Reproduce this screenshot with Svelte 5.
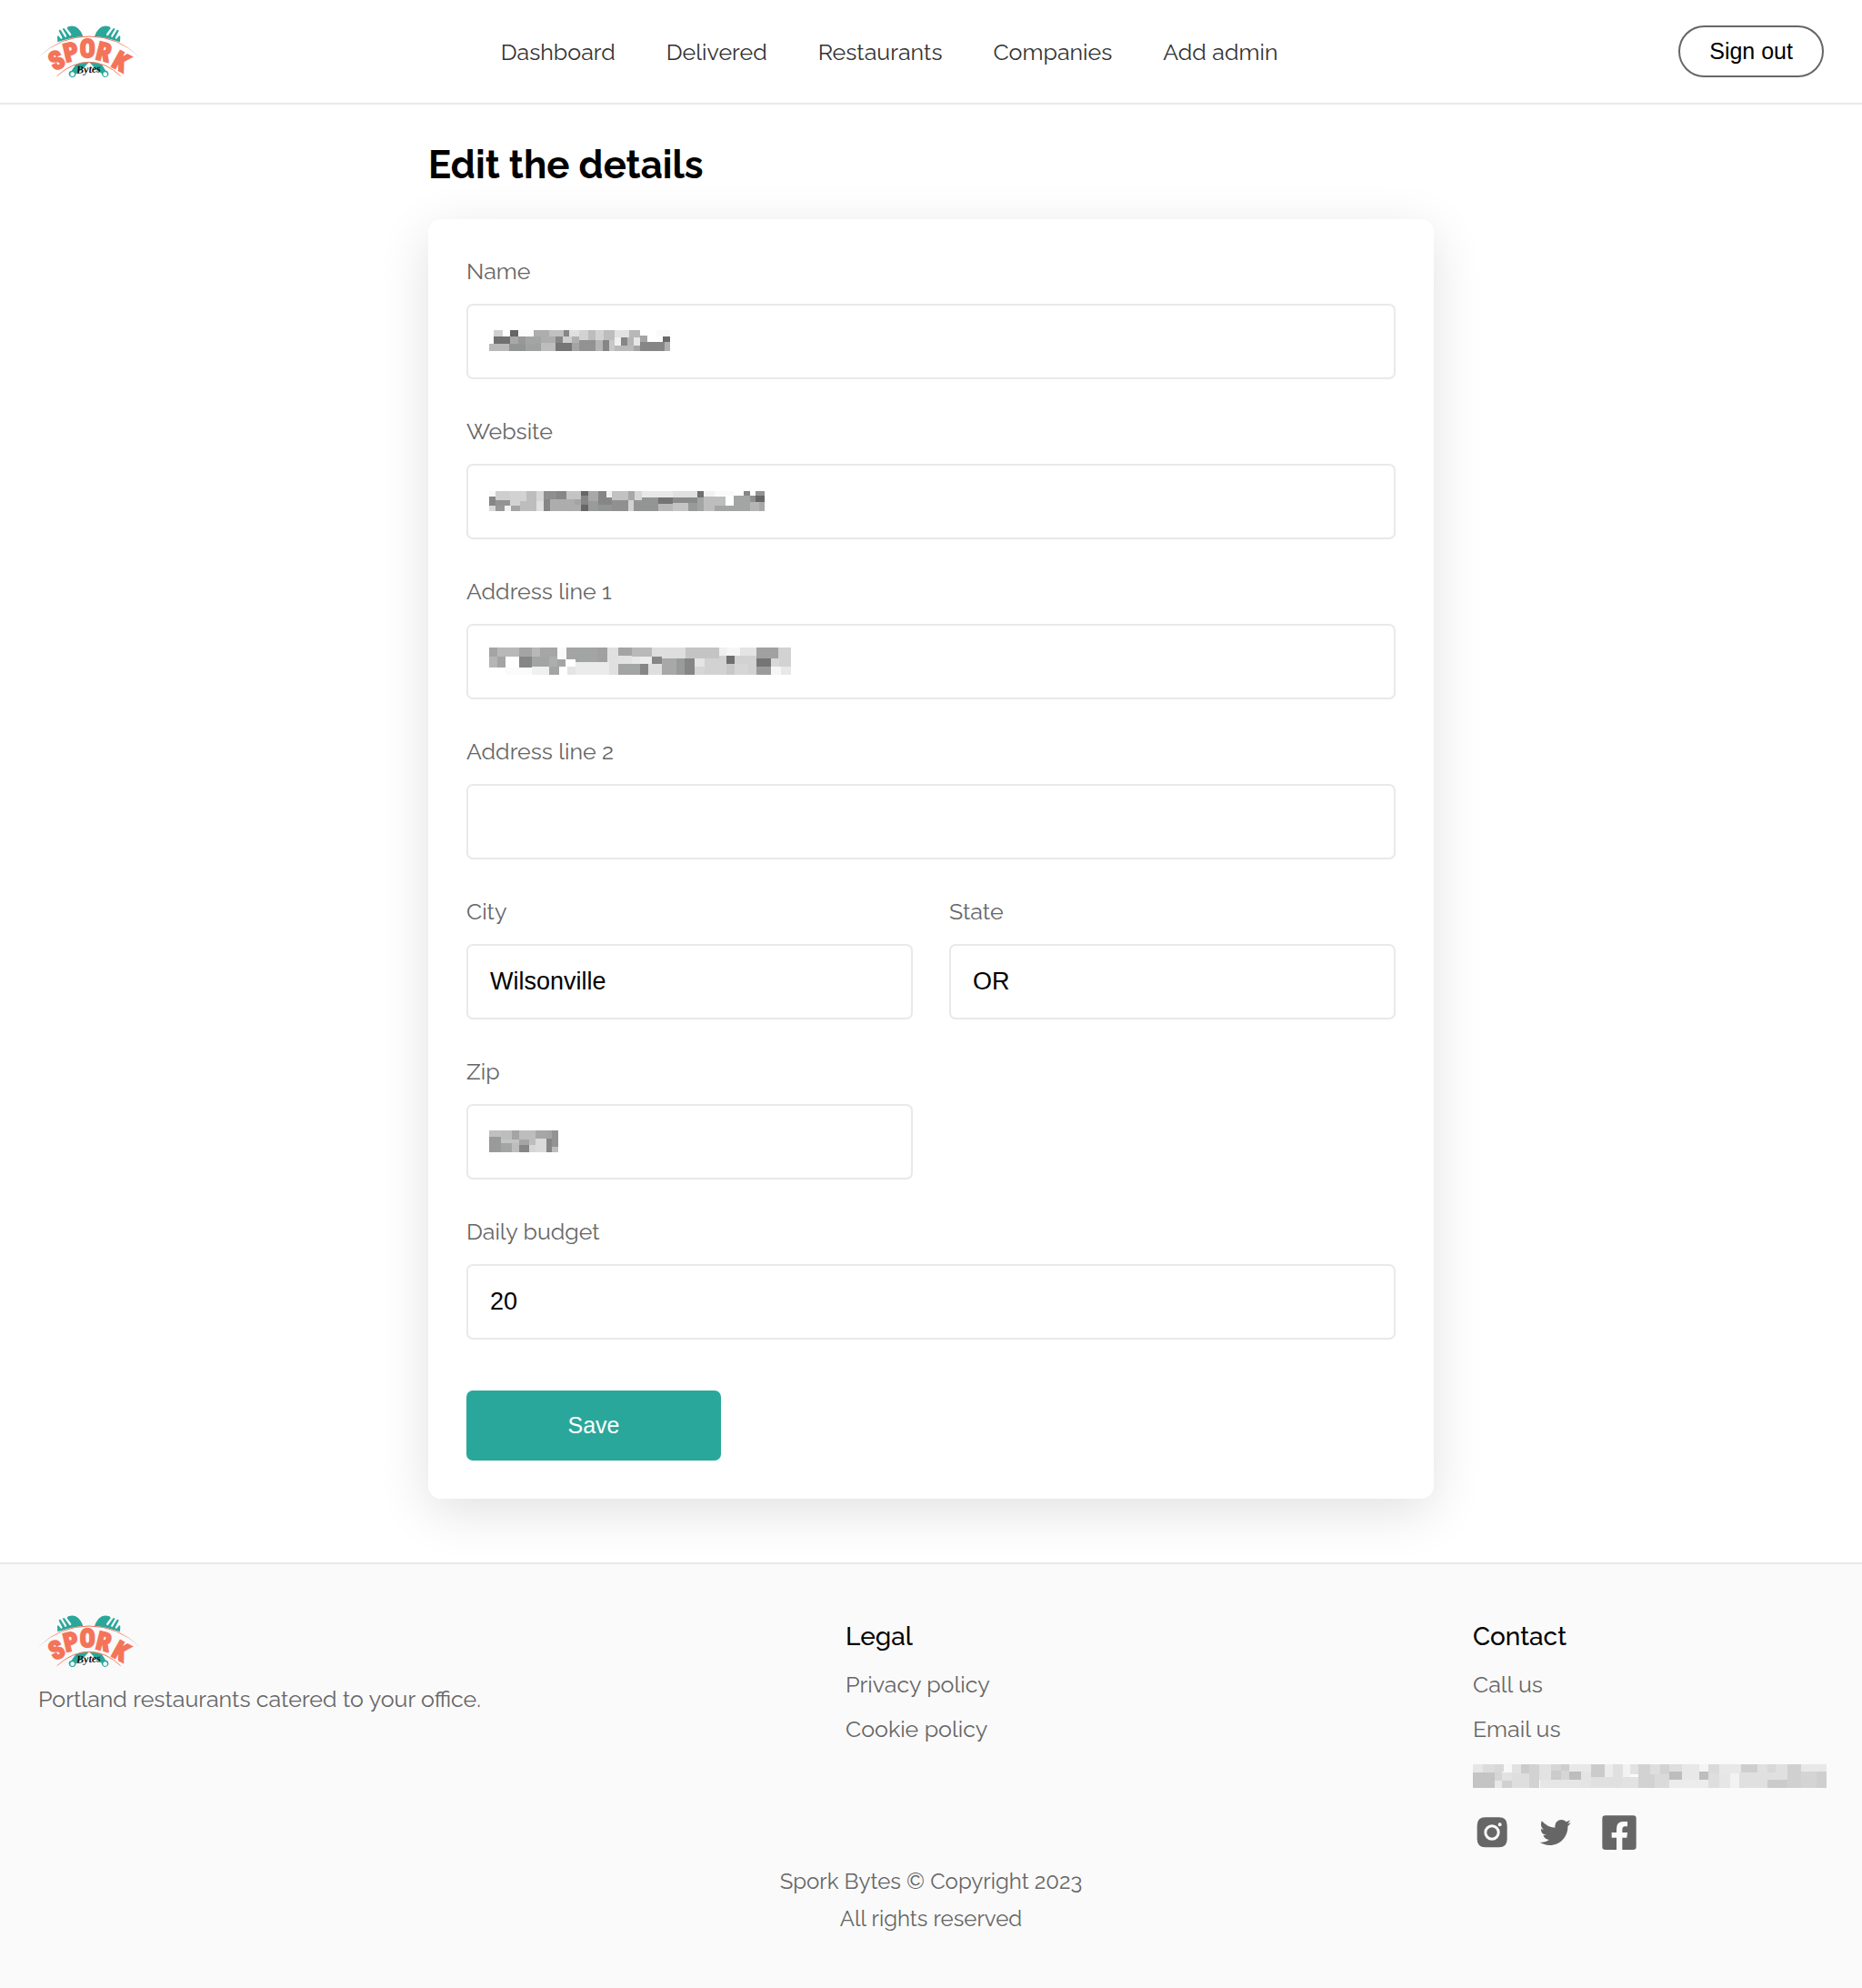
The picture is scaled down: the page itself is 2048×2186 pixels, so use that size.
<script>
  const parse = (text) =>
    text.trim().split(/[;\n]+/).map((cell) => {
      const [x, y, w, h, tone] = cell.trim().split(' ');
      return { x, y, w, h, fill: '#' + tone };
    });

  // Redacted values: each cell is "x y width height tone", in thirds of a pixel.
  const masks = {
    name: {
      box: '264 669 597 69', width: 199, height: 23,
      cells: parse(`279 669 30 21 d0d0d0;333 669 27 21 666;360 669 51 21 fcfcfc;411 669 51 21 adadad;462 669 48 21 c0c0c0;510 669 18 21 868686;528 669 33 21 e0e0e0;561 669 30 33 d2d2d2;591 669 24 33 bdbdbd;615 669 27 33 d2d2d2;642 669 36 33 bdbdbd;678 669 48 24 e2e2e2;726 669 36 24 b8b8b8;816 669 45 21 fafafa
279 690 54 24 707070;333 690 27 24 a8a8a8;360 690 24 24 989898;384 690 51 24 a3a5a4;435 690 48 22 adadad;483 690 25 21 868686;508 690 29 21 cfcfcf;537 690 24 21 b0b0b0;678 693 21 27 f0f0f0;699 693 21 27 868686;720 693 21 27 b5b5b5;741 693 21 27 e6e6e6;762 687 24 21 a3a5a4;837 690 24 18 6a6a6a
264 714 66 24 b9b9b9;330 714 54 24 939594;384 714 51 24 a0a2a1;435 711 48 27 bdbdbd;483 711 54 27 757575;537 711 24 27 a3a5a4;561 702 54 36 929292;615 702 24 36 b5b5b5;639 702 21 36 868686;660 702 18 36 c8c8c8;678 720 63 18 b9b9b9;741 720 21 18 a3a5a4;762 708 81 30 868686;843 708 18 30 b0b0b0`)
    },
    website: {
      box: '111 120 909 66', width: 303, height: 22,
      cells: parse(`111 120 21 18 f8f8f8;132 120 48 30 cecece;180 120 54 33 d2d2d2;234 120 33 66 bdbdbd;213 153 21 33 bdbdbd;267 120 24 33 d6d6d6;267 153 24 33 e0e0e0;291 120 42 27 8e8e8e;333 120 33 27 868686;366 120 48 27 c4c4c4;414 120 24 16 666;414 136 24 29 868686;414 165 24 21 666;438 120 33 33 a8a8a8;471 120 27 45 868686;498 120 18 20 f2f2f2;498 140 18 25 868686;516 120 54 30 c2c2c2;570 120 21 30 a8a8a8;591 120 24 30 d6d6d6;615 120 102 21 e8e8e8;717 120 81 21 e0e0e0;798 120 21 20 707070;819 120 36 18 f2f2f2;855 120 63 15 fafafa;951 120 21 15 868686;990 120 30 15 939393
111 138 21 30 868686;132 150 48 18 929493;180 153 33 15 d2d2d2;291 147 21 39 868686;312 147 102 39 adadad;393 147 21 18 a3a5a4;516 150 54 36 909090;570 150 18 36 d2d2d2;588 150 27 36 939594;615 141 54 45 939594;669 141 48 20 747474;717 141 81 18 8a8a8a;798 140 21 46 a3a5a4;819 138 72 48 bdbdbd;918 135 54 33 a3a5a4;972 135 18 21 909090;990 135 30 21 666
111 168 21 18 d8d8d8;132 168 30 18 989898;162 168 21 18 f2f2f2;183 168 30 18 a3a5a4;438 153 33 33 999b9a;471 165 45 21 939594;669 161 48 25 b8b8b8;717 159 51 27 c4c4c4;768 159 30 27 989a99;855 168 63 18 a3a5a4;918 168 54 18 a3a5a4;972 156 30 30 b5b5b5;1002 156 18 30 a8a8a8`)
    },
    address1: {
      box: '114 642 996 90', width: 332, height: 30,
      cells: parse(`114 642 27 30 a3a5a4;141 642 72 30 b8b8b8;213 642 42 30 a3a5a4;255 642 27 30 b8b8b8;282 642 57 30 a6a6a6;339 642 30 39 fafafa;369 642 102 48 a3a5a4;471 642 33 48 a0a0a0;504 642 36 48 e0e0e0;540 642 45 27 a3a5a4;585 642 66 30 b9b9b9;651 642 111 36 dedede;762 642 111 36 c4c4c4;873 642 24 27 f0f0f0;897 642 45 27 f6f6f6;942 642 54 27 e4e4e4;996 642 72 36 a0a2a1;1068 642 42 63 d2d2d2
114 672 27 36 b5b5b5;141 672 27 36 a3a5a4;213 672 42 36 868686;255 672 57 33 a3a5a4;312 672 27 33 adadad;339 681 27 24 a3a5a4;369 682 30 23 ffffff;540 669 45 27 e2e2e2;585 672 27 24 e8e8e8;612 672 39 24 ececec;651 672 33 24 868686;684 678 48 54 a8a8a8;732 678 27 54 999b9a;759 678 33 54 868686;792 678 33 27 e4e4e4;825 678 72 54 d2d2d2;873 669 24 27 d2d2d2;897 669 27 27 707070;924 669 72 27 d2d2d2;996 678 48 27 757575;1044 678 27 27 d8d8d8
168 708 87 24 fbfbfb;255 705 57 27 f0f0f0;312 705 33 27 a3a5a4;372 705 27 27 e4e4e4;399 690 111 42 ebebeb;510 690 30 42 e0e0e0;540 696 72 36 a3a5a4;612 696 27 36 868686;639 696 45 36 dedede;792 705 33 27 d6d6d6;897 696 27 36 c8c8c8;924 696 45 36 d6d6d6;969 696 27 36 d2d2d2;996 705 48 27 9a9c9b;1044 705 33 27 f6f6f6;1077 705 33 27 e8e8e8`)
    },
    zip: {
      box: '0 0 227 72', width: 76, height: 24,
      cells: parse(`0 0 39 21 c0c0c0;39 0 35 30 bdbdbd;74 0 25 30 a3a5a4;99 0 54 48 bdbdbd;153 0 36 27 a6a8a7;189 0 18 27 a3a5a4;207 0 20 54 939393
0 21 39 51 999b9a;39 30 60 12 c4c4c4;39 42 35 30 a3a5a4;74 42 25 30 bdbdbd;99 30 33 18 a3a5a4;99 48 33 24 868686;132 48 21 24 d6d6d6;153 27 36 45 dadada;189 27 18 45 868686;207 54 20 18 bdbdbd`)
    },
    contact: {
      box: '60 540 1167 78', width: 389, height: 26,
      cells: parse(`60 540 33 27 e6e6e6;93 540 39 27 dcdcdc;132 540 30 24 d8d8d8;162 540 27 27 f8f8f8;189 540 30 30 e2e2e2;219 540 27 30 cbcbcb;279 540 39 51 e2e2e2;246 540 33 78 d2d2d2;318 540 33 21 d6d6d6;351 540 27 21 cecece;378 540 72 24 e8e8e8;450 540 45 42 cbcbcb;495 540 27 42 ececec;522 540 33 42 e0e0e0;555 540 24 42 f2f2f2;579 540 27 33 e2e2e2;606 540 54 78 d2d2d2;645 540 33 33 dedede;678 540 30 33 d2d2d2;708 540 42 24 dedede;750 540 57 51 e8e8e8;807 540 30 24 f4f4f4;837 540 36 30 dadada;873 540 72 30 e8e8e8;945 540 54 27 cecece;999 540 33 30 e0e0e0;1032 540 27 27 d8d8d8;1059 540 39 51 e0e0e0;1098 540 45 78 d0d0d0;1143 540 84 24 e8e8e8
60 567 72 51 c4c4c4;132 564 24 30 d6d6d6;156 567 33 27 e2e2e2;189 570 57 48 dedede;318 561 33 30 cbcbcb;351 561 27 30 d6d6d6;378 564 39 27 bdbdbd;417 564 33 54 e4e4e4;282 591 135 27 e6e6e6;132 594 24 24 e8e8e8;156 594 33 24 d0d0d0;450 582 102 36 e0e0e0;552 582 54 36 e2e2e2;660 573 48 45 dadada;708 564 42 27 bdbdbd;708 591 129 27 ececec;807 564 30 27 bdbdbd;837 570 36 48 dedede;873 570 36 48 e6e6e6;909 570 30 48 f2f2f2;939 567 93 51 e0e0e0;1032 567 66 24 e0e0e0;1032 591 66 27 cbcbcb;1143 564 51 54 d4d4d4;1194 564 33 54 cfcfcf`)
    }
  };

  const links = ['Dashboard', 'Delivered', 'Restaurants', 'Companies', 'Add admin'];

  const fields = [
    { id: 'name', label: 'Name', value: '', wide: true },
    { id: 'website', label: 'Website', value: '', wide: true },
    { id: 'address1', label: 'Address line 1', value: '', wide: true },
    { id: 'address2', label: 'Address line 2', value: '', wide: true },
    { id: 'city', label: 'City', value: 'Wilsonville', wide: false },
    { id: 'state', label: 'State', value: 'OR', wide: false },
    { id: 'zip', label: 'Zip', value: '', wide: false },
    { id: 'budget', label: 'Daily budget', value: '20', wide: true }
  ];
</script>

{#snippet mosaic(mask)}
  <svg class="mosaic" viewBox={mask.box} width={mask.width} height={mask.height} shape-rendering="crispEdges" aria-hidden="true">
    {#each mask.cells as c}
      <rect x={c.x} y={c.y} width={c.w} height={c.h} fill={c.fill} />
    {/each}
  </svg>
{/snippet}

{#snippet logo()}
  <svg class="logo" viewBox="36 53 336 180" width="112" height="60" role="img" aria-label="Spork Bytes">
    <defs>
      <linearGradient id="arc" x1="36" x2="372" y1="0" y2="0" gradientUnits="userSpaceOnUse">
        <stop offset="0" stop-color="#aaa" stop-opacity="0.1" />
        <stop offset="0.18" stop-color="#f4745a" stop-opacity="0.8" />
        <stop offset="0.3" stop-color="#f4745a" />
        <stop offset="0.7" stop-color="#f4745a" />
        <stop offset="0.82" stop-color="#f4745a" stop-opacity="0.8" />
        <stop offset="1" stop-color="#aaa" stop-opacity="0.1" />
      </linearGradient>
    </defs>
    <g fill="#2aa79b">
      <path d="M100 108 L99 90 Q101 84 105 90 L112 98 Q117 97 115 92 L104 71 Q106 64 112 71 L125 92 Q131 92 129 86 L117 66 Q119 58 124 65 L140 87 Q147 87 144 80 L131 63 Q131 56 143 55 Q171 52 184 89 Q145 92 100 108Z" />
      <path d="M306 108 L307 90 Q305 84 301 90 L294 98 Q289 97 291 92 L302 71 Q300 64 294 71 L281 92 Q275 92 277 86 L289 66 Q287 58 282 65 L266 87 Q259 87 262 80 L275 63 Q275 56 263 55 Q235 52 222 89 Q261 92 306 108Z" />
      <path fill-rule="evenodd" d="M203 173 Q180 173 160 182 L146 202 Q136 204 137 214 Q140 224 150 224 Q160 223 161 211 L186 195 L220 195 L245 211 Q247 223 257 224 Q268 223 268 213 Q268 203 259 202 L246 182 Q226 173 203 173Z M149 207 A7 7 0 1 0 149 221 A7 7 0 1 0 149 207Z M257 207 A7 7 0 1 0 257 221 A7 7 0 1 0 257 207Z" />
    </g>
    <path d="M193 186 L204 174 L216 186 L226 200 L182 200Z" fill="#fff" />
    <path d="M38 156 Q110 89 204 89 Q298 89 370 156" fill="none" stroke="url(#arc)" stroke-width="3" />
    <path d="M98 220 Q148 174 204 174 Q260 174 308 220" fill="none" stroke="url(#arc)" stroke-width="3" />
    <g class="letters">
      <text transform="translate(97 168) rotate(-27)" y="28">S</text>
      <text transform="translate(144 141) rotate(-13)" y="28">P</text>
      <text transform="translate(199 131)" y="28">O</text>
      <text transform="translate(252 141) rotate(14)" y="28">R</text>
      <text transform="translate(309 172) rotate(29)" y="28">K</text>
    </g>
    <text class="script" transform="translate(203 209) rotate(-3)">Bytes</text>
  </svg>
{/snippet}

<div class="page">
  <header>
    <a class="brand" href="#home">{@render logo()}</a>
    <nav>
      {#each links as link}
        <a href="#{link.toLowerCase().replace(' ', '-')}">{link}</a>
      {/each}
    </nav>
    <button class="signout" type="button">Sign out</button>
  </header>

  <main>
    <h1>Edit the details</h1>
    <form class="card">
      {#each fields as f}
        <div class="field" class:wide={f.wide}>
          <label for={f.id}>{f.label}</label>
          <div class="control">
            <input id={f.id} type="text" value={f.value} />
            {#if masks[f.id]}{@render mosaic(masks[f.id])}{/if}
          </div>
        </div>
      {/each}
      <button class="save" type="button">Save</button>
    </form>
  </main>

  <footer>
    <div class="columns">
      <div>
        <a class="brand" href="#home">{@render logo()}</a>
        <p class="tagline">Portland restaurants catered to your office.</p>
      </div>
      <div class="list">
        <h2>Legal</h2>
        <a href="#privacy">Privacy policy</a>
        <a href="#cookies">Cookie policy</a>
      </div>
      <div class="list">
        <h2>Contact</h2>
        <a href="#call">Call us</a>
        <a href="#email">Email us</a>
        <div class="masked">{@render mosaic(masks.contact)}</div>
        <div class="social">
          <a href="#instagram" aria-label="Instagram">
            <svg viewBox="0 0 126 126" width="42" height="42">
              <path fill-rule="evenodd" d="M41 13H86Q113 13 113 40V85Q113 112 86 112H41Q14 112 14 85V40Q14 13 41 13Z M63 37A26 26 0 1 0 63 89A26 26 0 1 0 63 37Z M89 31A6 6 0 1 0 89 43A6 6 0 1 0 89 31Z" />
              <circle cx="63" cy="63" r="17" />
            </svg>
          </a>
          <a href="#twitter" aria-label="Twitter">
            <svg viewBox="0 0 24 24" width="42" height="42">
              <path d="M19.633 7.997c.013.175.013.349.013.523 0 5.325-4.053 11.461-11.46 11.461-2.282 0-4.402-.661-6.186-1.809.324.037.636.05.973.05a8.07 8.07 0 0 0 5.001-1.721 4.036 4.036 0 0 1-3.767-2.793c.249.037.499.062.761.062.361 0 .724-.05 1.061-.137a4.027 4.027 0 0 1-3.23-3.953v-.05c.537.299 1.16.486 1.82.511a4.022 4.022 0 0 1-1.796-3.354c0-.748.199-1.434.548-2.032a11.457 11.457 0 0 0 8.306 4.215c-.062-.3-.1-.611-.1-.923a4.026 4.026 0 0 1 4.028-4.028c1.16 0 2.207.486 2.943 1.272a7.957 7.957 0 0 0 2.556-.973 4.02 4.02 0 0 1-1.771 2.22 8.073 8.073 0 0 0 2.319-.624 8.645 8.645 0 0 1-2.019 2.083z" />
            </svg>
          </a>
          <a href="#facebook" aria-label="Facebook">
            <svg viewBox="0 0 126 126" width="42" height="42">
              <path d="M17 7H109Q119 7 119 17V110Q119 120 109 120H73V80H88L90 63H73V54Q73 43 82 43H90V27H76Q54 27 54 50V63H38V80H54V120H17Q7 120 7 110V17Q7 7 17 7Z" />
            </svg>
          </a>
        </div>
      </div>
    </div>
    <div class="legal">
      <p>Spork Bytes © Copyright 2023</p>
      <p>All rights reserved</p>
    </div>
  </footer>
</div>

<style>
  :global(body) {
    margin: 0;
    background: #fff;
  }
  .page {
    display: flex;
    flex-direction: column;
    min-height: 100vh;
    font-family: Raleway, Lato, sans-serif;
    font-size: 25px;
    line-height: 30px;
    color: #666;
  }
  a {
    color: inherit;
    text-decoration: none;
  }
  p, h1, h2 {
    margin: 0;
  }
  input, button {
    font-family: "Liberation Sans", Arial, sans-serif;
    margin: 0;
    box-sizing: border-box;
  }
  header {
    display: flex;
    align-items: center;
    justify-content: space-between;
    padding: 28px 42px;
    border-bottom: 2px solid #e9e9e9;
  }
  .brand {
    display: block;
    width: 68px;
    height: 57px;
  }
  .logo {
    display: block;
    overflow: visible;
  }
  .letters {
    font: 700 82px "Liberation Sans Narrow", "Roboto Condensed", Roboto, sans-serif;
    fill: #f4745a;
    stroke: #f4745a;
    stroke-width: 7;
    text-anchor: middle;
  }
  .script {
    font: italic 700 36px "Liberation Serif", serif;
    fill: #111;
    text-anchor: middle;
  }
  nav {
    display: flex;
    gap: 56px;
    color: #333;
  }
  .signout {
    height: 57px;
    padding: 0 32px;
    border: 2px solid #666;
    border-radius: 29px;
    background: #fff;
    color: #000;
    font-size: 25px;
  }
  main {
    box-sizing: border-box;
    width: 100%;
    max-width: 1106px;
    margin: 0 auto;
    padding: 43px 0 70px;
  }
  h1 {
    margin-bottom: 35px;
    font-size: 42px;
    line-height: 48px;
    font-weight: 700;
    color: #000;
  }
  .card {
    display: grid;
    grid-template-columns: 1fr 1fr;
    gap: 42px 40px;
    padding: 42px;
    border-radius: 14px;
    background: #fff;
    box-shadow: 0 14px 56px rgba(0, 0, 0, 0.12);
  }
  .wide {
    grid-column: 1 / -1;
  }
  label {
    display: block;
    margin-bottom: 21px;
  }
  .control {
    display: grid;
    align-items: center;
  }
  .control > :global(*) {
    grid-area: 1 / 1;
  }
  .control .mosaic {
    margin-bottom: 2px;
    margin-left: 25px;
    pointer-events: none;
  }
  .mosaic {
    display: block;
  }
  input {
    width: 100%;
    height: 83px;
    padding: 0 24px;
    border: 2px solid #e9e9e9;
    border-radius: 7px;
    background: #fff;
    color: #000;
    font-size: 27px;
  }
  .save {
    grid-column: 1 / -1;
    width: 280px;
    height: 77px;
    margin-top: 14px;
    border: 0;
    border-radius: 7px;
    background: #2aa79b;
    color: #fff;
    font-size: 25px;
  }
  footer {
    flex: 1;
    padding: 56px 42px;
    border-top: 2px solid #e9e9e9;
    background: #fafafa;
  }
  .columns {
    display: grid;
    grid-template-columns: minmax(0, 888fr) minmax(0, 690fr) minmax(0, 386fr);
  }
  .tagline {
    margin-top: 20px;
  }
  .list {
    display: flex;
    flex-direction: column;
    align-items: flex-start;
    padding-top: 7px;
  }
  .list > a {
    margin-top: 19px;
  }
  h2 {
    margin-bottom: 1px;
    font-size: 28px;
    line-height: 34px;
    font-weight: 500;
    color: #000;
  }
  .masked {
    margin-top: 24px;
  }
  .social {
    display: flex;
    gap: 28px;
    margin-top: 28px;
    fill: #666;
  }
  .social a, .social svg {
    display: block;
  }
  .legal {
    margin-top: 12px;
    font-size: 24px;
    line-height: 41px;
    text-align: center;
  }
</style>
